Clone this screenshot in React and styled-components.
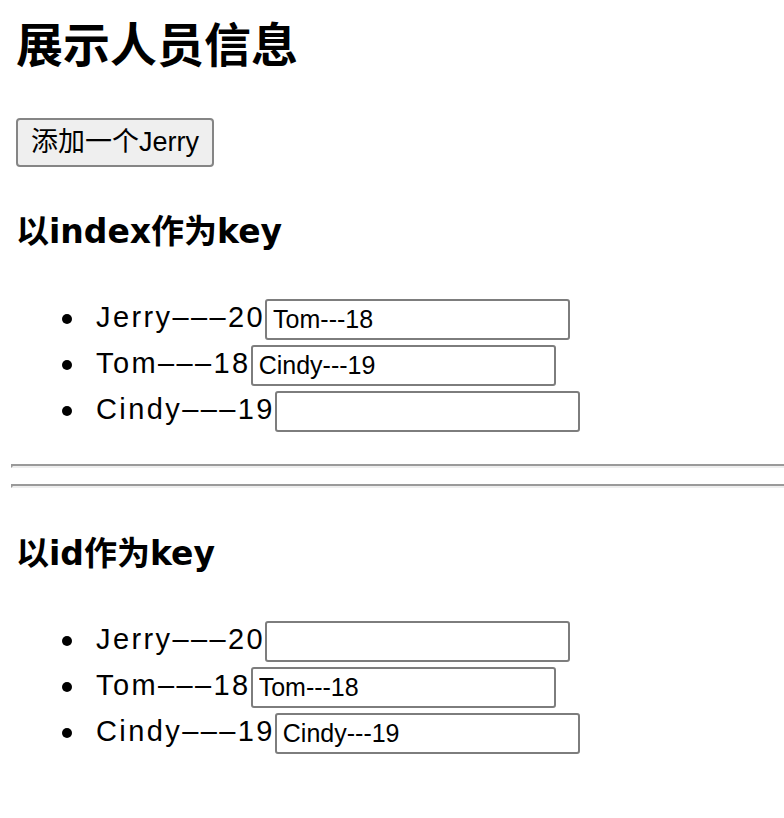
import React from "react";
import styled, { createGlobalStyle } from "styled-components";

const GlobalStyle = createGlobalStyle`
  html, body {
    margin: 0;
    padding: 0;
    background: #ffffff;
    overflow-x: hidden;
  }
  body {
    font-family: "Liberation Sans", "Noto Sans CJK SC", sans-serif;
    color: #000000;
  }
`;

const Page = styled.div`
  display: flow-root;
  padding-left: 16px;
  padding-bottom: 40px;
`;

const Title = styled.h1`
  margin: 22px 0 0;
  font-family: "Liberation Sans", "Noto Sans CJK SC", sans-serif;
  font-size: 47px;
  line-height: 47px;
  font-weight: 700;
`;

const AddButton = styled.button`
  display: block;
  box-sizing: border-box;
  margin-top: 49px;
  height: 49px;
  padding: 0 13px;
  font-family: "Liberation Sans", "Noto Sans CJK SC", sans-serif;
  font-size: 27px;
  line-height: 1;
  color: #000000;
  background: #efefef;
  border: 2px solid #858585;
  border-radius: 4px;
`;

const Section = styled.section`
  margin-top: ${(p) => p.$top}px;
`;

const SectionTitle = styled.h2`
  margin: 0;
  font-family: "DejaVu Sans", "Noto Sans CJK SC", sans-serif;
  font-size: 33px;
  line-height: 33px;
  font-weight: 700;
`;

const PersonList = styled.ul`
  list-style: none;
  margin: 48px 0 0;
  padding: 0 0 0 46px;
`;

const PersonItem = styled.li`
  display: flex;
  align-items: center;
  height: 46px;
`;

const Bullet = styled.span`
  width: 10px;
  height: 10px;
  border-radius: 50%;
  background: #000000;
  margin-right: 24px;
  flex: none;
`;

const Label = styled.span`
  font-size: 29px;
  letter-spacing: 2.4px;
  line-height: 1;
  padding-bottom: 4px;
  white-space: nowrap;
`;

const NameInput = styled.input`
  box-sizing: border-box;
  width: 305px;
  height: 41px;
  padding: 0 6px;
  font-family: "Liberation Sans", sans-serif;
  font-size: 25px;
  color: #000000;
  background: #ffffff;
  border: 2px solid #7d7d7d;
  border-radius: 3px;
  outline: none;
`;

const Divider = styled.hr`
  height: 0;
  margin: ${(p) => p.$top}px 0 0 -5px;
  border-top: 2px solid #9a9a9a;
  border-left: 2px solid #9a9a9a;
  border-bottom: 2px solid #eeeeee;
  border-right: 0;
`;

const people = [
  { id: 3, name: "Jerry", age: 20 },
  { id: 1, name: "Tom", age: 18 },
  { id: 2, name: "Cindy", age: 19 },
];

const PersonSection = ({ title, values, top }) => (
  <Section $top={top}>
    <SectionTitle>{title}</SectionTitle>
    <PersonList>
      {people.map((p, i) => (
        <PersonItem key={p.id}>
          <Bullet />
          <Label>
            {p.name}–––{p.age}
          </Label>
          <NameInput type="text" defaultValue={values[i]} />
        </PersonItem>
      ))}
    </PersonList>
  </Section>
);

export default function App() {
  return (
    <>
      <GlobalStyle />
      <Page>
        <Title>展示人员信息</Title>
        <AddButton>添加一个Jerry</AddButton>
        <PersonSection
          title="以index作为key"
          top={48}
          values={["Tom---18", "Cindy---19", ""]}
        />
        <Divider $top={30} />
        <Divider $top={16} />
        <PersonSection
          title="以id作为key"
          top={49}
          values={["", "Tom---18", "Cindy---19"]}
        />
      </Page>
    </>
  );
}
